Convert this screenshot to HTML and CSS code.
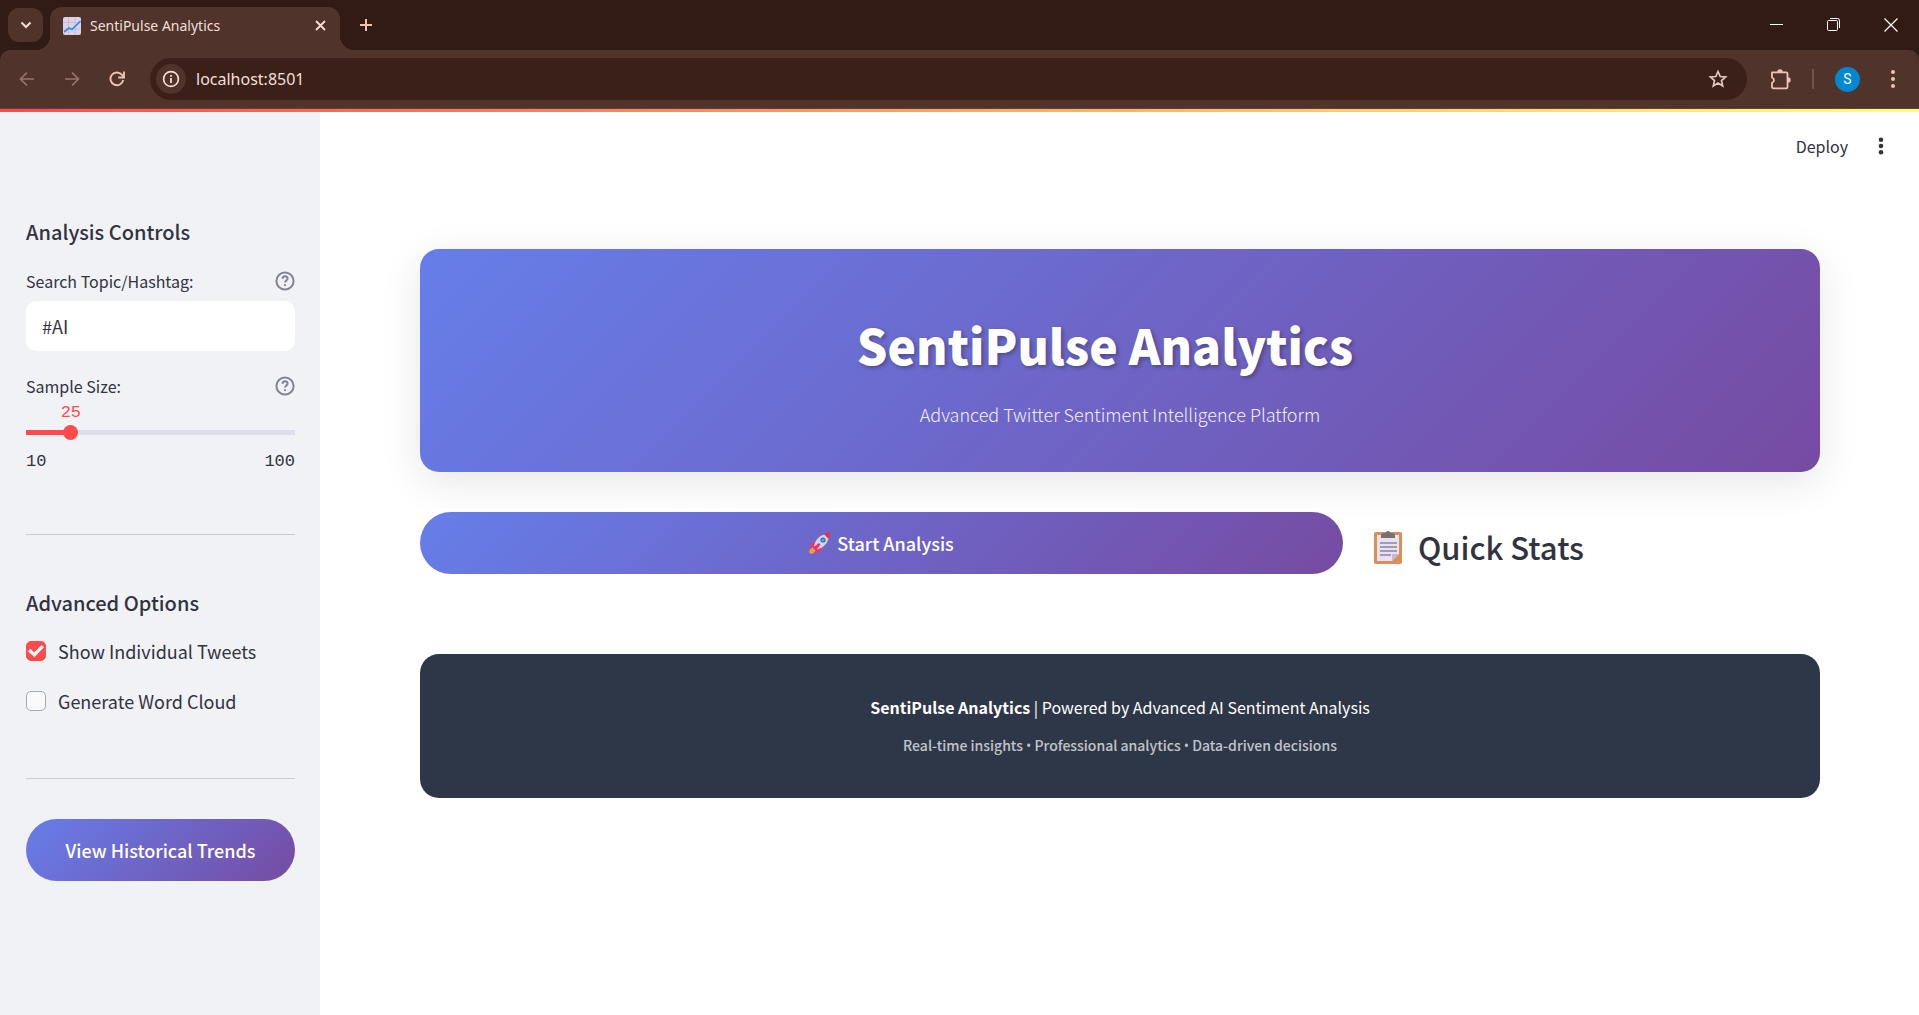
FILE: index.html
```html
<!DOCTYPE html>
<html lang="en">
<head>
<meta charset="utf-8">
<title>SentiPulse Analytics</title>
<link rel="stylesheet" href="styles.css">
</head>
<body>
<div class="browser">
  <div class="tabstrip">
    <button class="tab-search" aria-label="Search tabs"><svg width="12" height="8" viewBox="0 0 12 8"><path d="M1.500 1.500L6 6l4.500-4.500" fill="none" stroke="currentColor" stroke-width="2"/></svg></button>
    <div class="tab">
      <svg class="favicon" width="18" height="18" viewBox="0 0 18 18"><rect width="18" height="18" rx="2" fill="#dcd3e8"/><path d="M0 5.500h18M0 12h18M5.500 0v18M12 0v18" stroke="#c6bdd6" stroke-width="1"/><path d="M1 15l5-4 3 1.500 8.500-8.500" fill="none" stroke="#2e8fe0" stroke-width="1.700"/></svg>
      <span class="tab-title">SentiPulse Analytics</span>
      <button class="tab-close" aria-label="Close tab"><svg width="11" height="11" viewBox="0 0 11 11"><path d="M1 1l9 9M10 1l-9 9" stroke="currentColor" stroke-width="1.800"/></svg></button>
    </div>
    <button class="new-tab" aria-label="New tab"><svg width="14" height="14" viewBox="0 0 14 14"><path d="M7 1v12M1 7h12" stroke="currentColor" stroke-width="2"/></svg></button>
    <div class="window-controls">
      <button aria-label="Minimize"><svg width="14" height="14" viewBox="0 0 14 14"><path d="M0 6.500h13" stroke="currentColor"/></svg></button>
      <button aria-label="Restore"><svg width="14" height="14" viewBox="0 0 14 14"><g fill="none" stroke="currentColor"><rect x=".5" y="2.500" width="10" height="10" rx="1"/><path d="M3 .5h7.500a2 2 0 0 1 2 2V10"/></g></svg></button>
      <button aria-label="Close"><svg width="14" height="14" viewBox="0 0 14 14"><path d="M.5 .5l13 13M13.500 .5l-13 13" stroke="currentColor" stroke-width="1.200"/></svg></button>
    </div>
  </div>
  <div class="toolbar">
    <button class="nav dim" aria-label="Back"><svg width="16" height="16" viewBox="0 0 16 16"><path d="M15 8H2M8 1.500L1.500 8 8 14.500" fill="none" stroke="currentColor" stroke-width="1.700"/></svg></button>
    <button class="nav dim" aria-label="Forward"><svg width="16" height="16" viewBox="0 0 16 16"><path d="M1 8h13M8 1.500L14.500 8 8 14.500" fill="none" stroke="currentColor" stroke-width="1.700"/></svg></button>
    <button class="nav" aria-label="Reload"><svg width="16" height="16" viewBox="0 0 16 16"><path d="M14.200 9A6.400 6.400 0 1 1 12.800 3.700L14.500 5.500" fill="none" stroke="currentColor" stroke-width="1.900"/><path d="M15 .5v6H9.200" fill="none" stroke="currentColor" stroke-width="1.900"/></svg></button>
    <div class="omnibox">
      <button class="site-info" aria-label="Site information"><svg width="18" height="18" viewBox="0 0 18 18"><circle cx="9" cy="9" r="7.400" fill="none" stroke="currentColor" stroke-width="1.700"/><path d="M9 8v5M9 5v1.800" stroke="currentColor" stroke-width="1.800"/></svg></button>
      <input class="url" type="text" aria-label="Address" value="localhost:8501">
      <button class="bookmark" aria-label="Bookmark"><svg width="20" height="20" viewBox="0 0 20 20"><path d="M10 2.500l2.200 5 5.400.5-4.100 3.600 1.200 5.300L10 14.100l-4.700 2.800 1.200-5.300L2.400 8l5.400-.5z" fill="none" stroke="currentColor" stroke-width="1.700"/></svg></button>
    </div>
    <button class="extensions" aria-label="Extensions"><svg width="22" height="22" viewBox="0 0 22 22"><path d="M2 4.300h14.200a1.300 1.300 0 0 1 1.300 1.300V19a1.300 1.300 0 0 1-1.300 1.300H3.300A1.300 1.300 0 0 1 2 19v-4.200a2.700 2.700 0 0 0 0-5.200z" fill="none" stroke="currentColor" stroke-width="1.800" stroke-linejoin="round"/><path d="M7.300 4a2.700 2.700 0 0 1 5.400 0zM18 9.300a2.700 2.700 0 0 1 0 5.400z" fill="currentColor"/></svg></button>
    <span class="separator"></span>
    <button class="profile" aria-label="Profile">S</button>
    <button class="menu" aria-label="Browser menu"><svg width="6" height="20" viewBox="0 0 6 20"><g fill="currentColor"><circle cx="3" cy="3" r="2"/><circle cx="3" cy="10" r="2"/><circle cx="3" cy="17" r="2"/></g></svg></button>
  </div>
</div>
<div class="decoration"></div>
<div class="app">
  <aside class="sidebar">
    <h2>Analysis Controls</h2>
    <div class="field-label"><label for="topic">Search Topic/Hashtag:</label><svg class="help" width="20" height="20" viewBox="0 0 20 20"><circle cx="10" cy="10" r="8.600"/><path d="M7.500 7.800c.2-3.400 5.200-3.200 5.100-.2 0 1.900-2.600 2-2.600 4M10 13.200v1.800"/></svg></div>
    <input id="topic" class="topic" type="text" value="#AI">
    <div class="field-label second"><label for="sample">Sample Size:</label><svg class="help" width="20" height="20" viewBox="0 0 20 20"><circle cx="10" cy="10" r="8.600"/><path d="M7.500 7.800c.2-3.400 5.200-3.200 5.100-.2 0 1.900-2.600 2-2.600 4M10 13.200v1.800"/></svg></div>
    <output class="value" for="sample" style="margin-left:16.667%">25</output>
    <input id="sample" class="slider" type="range" min="10" max="100" value="25">
    <div class="range"><span>10</span><span>100</span></div>
    <hr>
    <h2>Advanced Options</h2>
    <label class="check"><input type="checkbox" checked>Show Individual Tweets</label>
    <label class="check"><input type="checkbox">Generate Word Cloud</label>
    <hr class="lower">
    <button class="primary">View Historical Trends</button>
  </aside>
  <main>
    <header class="app-header">
      <button class="deploy">Deploy</button>
      <button class="app-menu" aria-label="App menu"><svg width="6" height="18" viewBox="0 0 6 18"><g fill="currentColor"><circle cx="3" cy="2.700" r="2.300"/><circle cx="3" cy="9" r="2.300"/><circle cx="3" cy="15.300" r="2.300"/></g></svg></button>
    </header>
    <div class="content">
      <section class="hero">
        <h1>SentiPulse Analytics</h1>
        <p>Advanced Twitter Sentiment Intelligence Platform</p>
      </section>
      <div class="columns">
        <button class="primary start"><svg width="22" height="22" viewBox="0 0 22 22"><path d="M6 9L2 12l-1 5 5-4zM13 16l-2 4-5 1 3-5z" fill="#f92f60"/><path d="M3.500 15.500l3 3-2.500 3H.5V18z" fill="#ff9b30"/><path d="M5 14C6 8 11 2.500 18 2l2 2c-.5 7-6 12-12 13.500z" fill="#dcd3e8"/><path d="M15 2.300Q18 .2 21 .5 21.500 4 19.500 7z" fill="#e8304e"/><path d="M10 11l1.500 1.500-4.500 6-3-3z" fill="#f92f60"/><circle cx="14" cy="8" r="2.600" fill="#26739f"/><circle cx="14" cy="8" r="1.600" fill="#3fa9f0"/></svg>Start Analysis</button>
        <h3><svg width="30" height="36" viewBox="1 0 30 36"><rect x="2" y="3" width="28" height="32" rx="2" fill="#d98f56"/><path d="M5 6h22v19l-7 7H5z" fill="#e9e1f3"/><path d="M20 32v-6a1 1 0 0 1 1-1h6z" fill="#c5b8d5"/><path d="M8 14h17M8 18h17M8 22h17M8 26h11" stroke="#8d859b" stroke-width="1.500"/><path d="M9 9V6q0-2 3-2h1.500a2.600 2.600 0 0 1 5 0H20q3 0 3 2v3z" fill="#737078"/></svg>Quick Stats</h3>
      </div>
      <footer>
        <p><strong>SentiPulse Analytics</strong> | Powered by Advanced AI Sentiment Analysis</p>
        <p class="tagline">Real-time insights <span class="dot">•</span> Professional analytics <span class="dot">•</span> Data-driven decisions</p>
      </footer>
    </div>
  </main>
</div>
</body>
</html>
```
FILE: styles.css
```css
* { box-sizing: border-box; }
body {
  margin: 0;
  min-height: 100vh;
  display: flex;
  flex-direction: column;
  font-family: "Noto Sans CJK SC", sans-serif;
  font-size: 18px;
  line-height: 28px;
  color: #31333f;
  background: #fff;
}
button { border: 0; padding: 0; background: none; color: inherit; font: inherit; display: flex; align-items: center; justify-content: center; }
input { font: inherit; color: inherit; border: 0; margin: 0; }
h1, h2, h3, p { margin: 0; }
svg { display: block; flex: none; }

.browser { background: #311b14; color: #f3dfd8; font-family: "Noto Sans", sans-serif; }
.tabstrip { height: 50px; display: flex; padding-left: 8px; }
.tab-search { width: 35px; height: 34px; margin-top: 8px; border-radius: 11px; background: #50342b; }
.tab {
  position: relative;
  width: 290px;
  height: 43px;
  margin: 7px 0 0 7px;
  padding: 0 14px 6px 13px;
  display: flex;
  align-items: center;
  border-radius: 12px 12px 0 0;
  background: #50342b;
}
.tab::before, .tab::after { content: ""; position: absolute; bottom: 0; width: 14px; height: 14px; }
.tab::before { right: 100%; background: radial-gradient(circle at 0 0, transparent 14px, #50342b 14px); }
.tab::after { left: 100%; background: radial-gradient(circle at 100% 0, transparent 14px, #50342b 14px); }
.tab-title { margin-left: 9px; font-size: 14px; line-height: 20px; }
.tab-close { margin-left: auto; }
.new-tab { width: 28px; margin-left: 12px; color: #f0c2b4; }
.window-controls { margin-left: auto; display: flex; color: #fff; }
.window-controls button { width: 57px; }
.toolbar {
  height: 59px;
  display: flex;
  align-items: center;
  padding: 0 13px 0 19px;
  border-radius: 10px 10px 0 0;
  border-bottom: 1px solid #5c443c;
  background: #50342b;
  color: #f0c2b4;
}
.nav { width: 16px; margin-right: 29px; }
.nav.dim { color: #94766c; }
.omnibox {
  flex: 1;
  height: 42px;
  margin-left: -4px;
  padding: 0 19px 0 6px;
  display: flex;
  align-items: center;
  border-radius: 21px;
  background: #3a2018;
  color: #f3dfd8;
}
.site-info { width: 30px; height: 30px; border-radius: 50%; background: #50342b; }
.url { flex: 1; min-width: 0; margin-left: 10px; padding: 0; background: none; font-size: 16px; }
.bookmark { color: #e0c8c0; }
.extensions { margin-left: 23px; }
.separator { width: 2px; height: 20px; margin: 0 21px 0 20px; background: #70544a; }
.profile { width: 25px; height: 25px; border-radius: 50%; background: #0288d1; color: #fff; font-family: Roboto, sans-serif; font-size: 14px; }
.menu { width: 6px; margin-left: 30px; margin-right: 10px; }
.decoration { height: 3px; background: linear-gradient(90deg, #ff4b4b, #fffd80); }

.app { flex: 1; display: flex; }
.sidebar { width: 320px; flex: none; padding: 104px 25px 40px 26px; background: #f0f2f6; display: flex; flex-direction: column; }
h2 { font-size: 20px; line-height: 32px; font-weight: 500; }
.field-label { display: flex; align-items: center; justify-content: space-between; margin-top: 20px; font-size: 16px; line-height: 26px; }
.field-label.second { margin-top: 22px; }
.help { fill: none; stroke: #808495; stroke-width: 2; }
.topic { width: 100%; height: 50px; margin-top: 7px; padding: 0 16px; border-radius: 10px; background: #fff; }
.value { width: 40px; margin-top: 2px; translate: -50% 0; text-align: center; }
.value, .range { font-family: "Liberation Mono", monospace; font-size: 17px; line-height: 24px; }
.value { color: #ff4b4b; }
/* The thumb's centre travels the full length of the track, so the control overhangs it by half a thumb. */
.slider {
  appearance: none;
  width: calc(100% + 16px);
  height: 16px;
  margin: -1px -8px 0;
  background: linear-gradient(90deg, #ff4b4b 16.7%, #dcdfe9 16.7%) center / calc(100% - 16px) 5px no-repeat;
}
.slider::-webkit-slider-thumb { appearance: none; width: 15px; height: 15px; border-radius: 50%; background: #ff4b4b; }
.range { display: flex; justify-content: space-between; margin-top: 10px; }
hr { width: 100%; margin: 60px 0 52px; border: 0; border-top: 1px solid #caccd1; }
.check { display: flex; align-items: center; gap: 12px; margin-top: 18px; height: 32px; }
h2 + .check { margin-top: 16px; }
.check input { appearance: none; display: grid; place-items: center; width: 20px; height: 20px; border: 1px solid #a8aab3; border-radius: 5px; background: #f9f9fc; }
.check input:checked { border-color: #ff4b4b; background: #ff4b4b; }
.check input:checked::after { content: ""; width: 16px; height: 12px; background: #fff; clip-path: polygon(0 52%, 14% 32%, 38% 62%, 86% 0, 100% 18%, 40% 100%); }
hr.lower { margin: 61px 0 40px; }
.primary { width: 100%; height: 62px; border-radius: 31px; background: linear-gradient(135deg, #667eea, #764ba2); color: #fff; font-weight: 500; }

main { flex: 1; min-width: 0; }
.app-header { height: 68px; padding: 0 35px 0 0; display: flex; align-items: center; justify-content: flex-end; gap: 30px; }
.deploy { font-size: 16px; }
.content { padding: 69px 99px 60px 100px; }
.hero {
  padding: 59px 40px 40px;
  min-height: 223px;
  border-radius: 19px;
  background: linear-gradient(135deg, #667eea, #764ba2);
  box-shadow: 0 10px 40px rgba(0, 0, 0, .1);
  color: #fff;
  text-align: center;
}
.hero h1 { padding-right: 30px; font-size: 48px; line-height: 72px; font-weight: 800; text-shadow: 2px 2px 4px rgba(0, 0, 0, .3); }
.hero p { margin-top: 18px; line-height: 32px; font-size: 18px; font-weight: 300; opacity: .9; }
.columns { display: grid; grid-template-columns: 923fr 447fr; gap: 30px; margin-top: 40px; }
.start { gap: 6px; }
h3 { display: flex; align-items: center; gap: 15px; height: 70px; font-size: 31px; line-height: 44px; font-weight: 500; }
footer { margin-top: 72px; padding: 39px 40px 40px; border-radius: 19px; background: #2d3748; color: #fff; text-align: center; font-size: 16px; line-height: 28px; }
footer .tagline { margin-top: 12px; font-size: 14px; line-height: 24px; opacity: .7; font-weight: 500; }
.dot { font-family: "Open Sans", sans-serif; }
```
